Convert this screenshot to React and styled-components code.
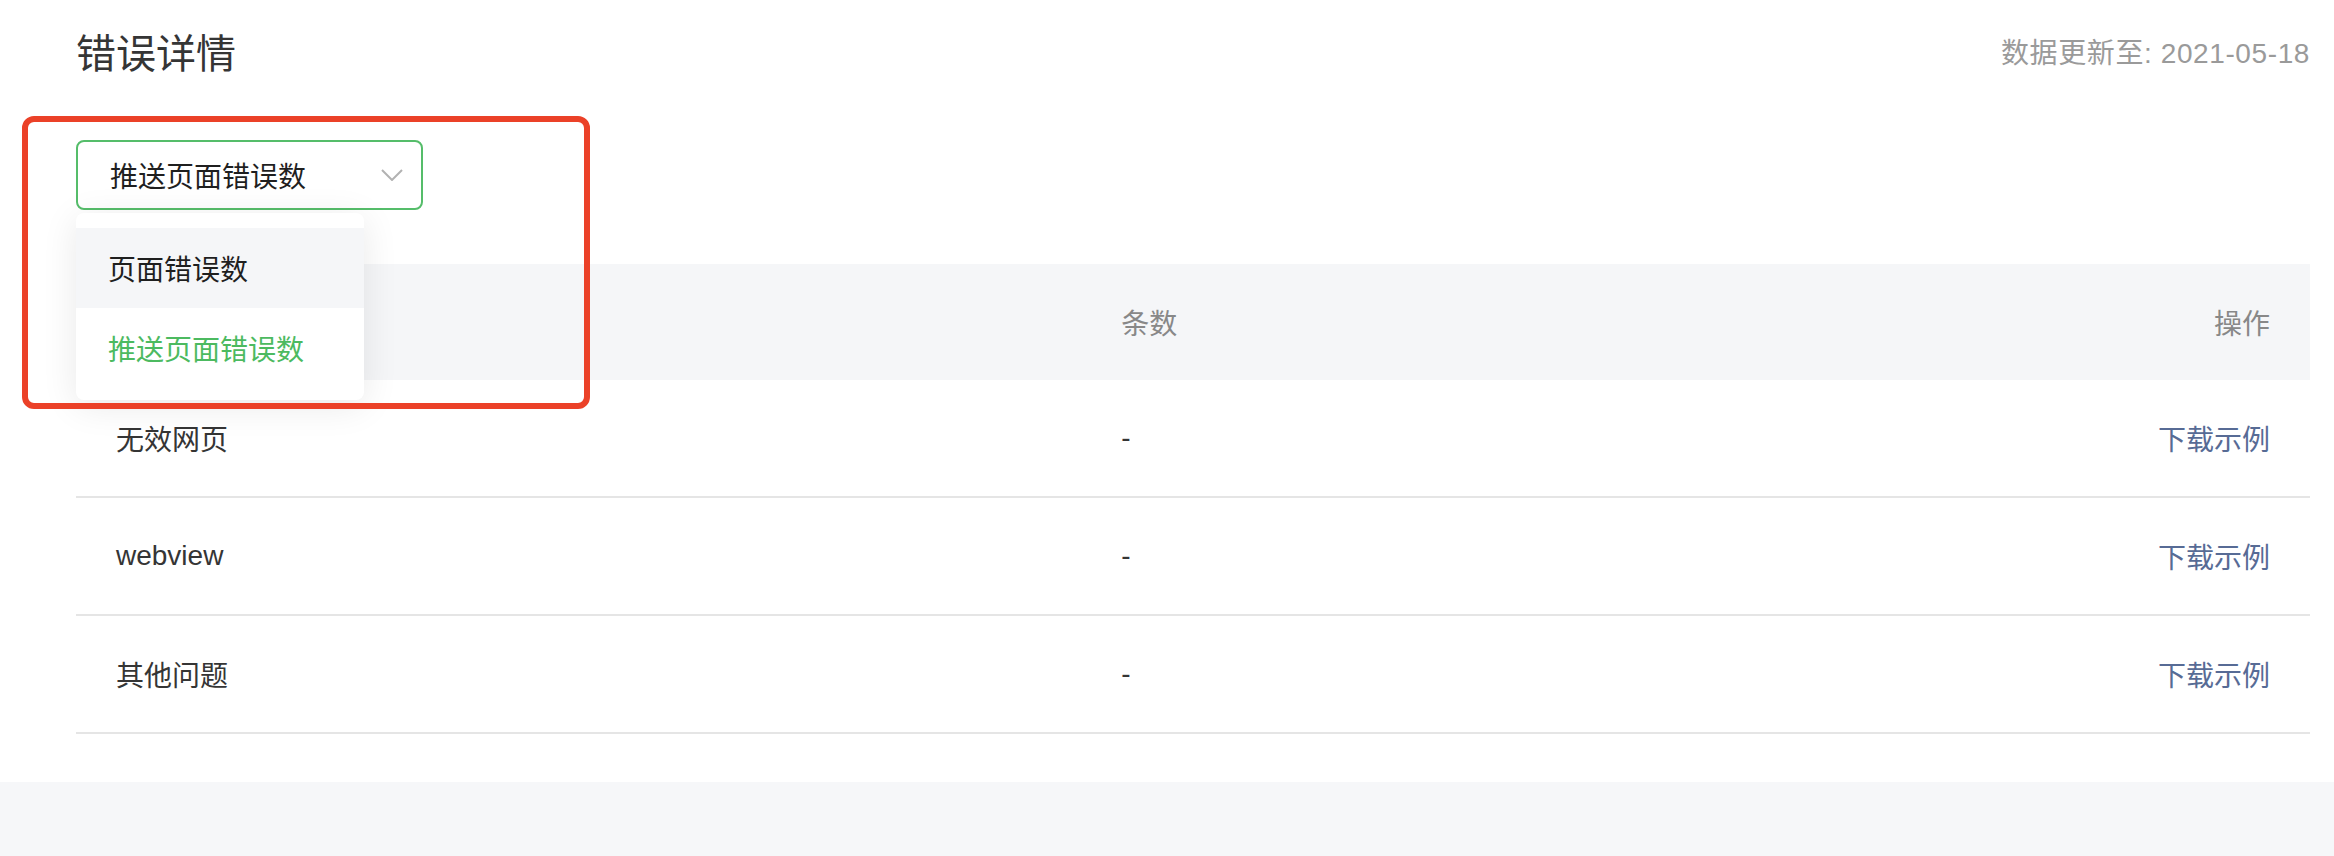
import styled, { createGlobalStyle } from "styled-components";

const GlobalStyle = createGlobalStyle`
  html, body {
    margin: 0;
    padding: 0;
    background: #f6f7f9;
  }
  body {
    font-family: "Liberation Sans", "Noto Sans CJK SC", sans-serif;
  }
`;

const Page = styled.div`
  min-height: 100vh;
  background: #f6f7f9;
`;

const Card = styled.section`
  background: #fff;
  padding: 26px 24px 48px 76px;
`;

const Header = styled.div`
  display: flex;
  justify-content: space-between;
  align-items: center;
  height: 56px;
`;

const Title = styled.h2`
  margin: 0;
  font-size: 40px;
  line-height: 56px;
  font-weight: 400;
  color: #353535;
`;

const UpdateTime = styled.span`
  font-size: 28px;
  line-height: 40px;
  letter-spacing: 0.6px;
  color: #9a9a9a;
`;

const Filter = styled.div`
  position: relative;
  width: 347px;
  margin-top: 58px;
`;

const Select = styled.div`
  box-sizing: border-box;
  height: 70px;
  display: flex;
  align-items: center;
  justify-content: space-between;
  padding: 0 18px 0 32px;
  border: 2px solid #55bd6a;
  border-radius: 8px;
  background: #fff;
  font-size: 28px;
  color: #1f1f1f;
`;

const Menu = styled.ul`
  position: absolute;
  top: 73px;
  left: 0;
  width: 288px;
  margin: 0;
  padding: 15px 0 12px;
  list-style: none;
  background: #fff;
  border-radius: 8px;
  box-shadow: 0 6px 36px rgba(0, 0, 0, 0.09);
  z-index: 2;
`;

const MenuItem = styled.li`
  height: 80px;
  display: flex;
  align-items: center;
  padding: 0 32px;
  font-size: 28px;
  color: ${(p) => (p.$selected ? "#4cba60" : "#1f1f1f")};
  background: ${(p) => (p.$hover ? "#f5f6f8" : "#fff")};
`;

const Marker = styled.div`
  position: absolute;
  left: -54px;
  top: -24px;
  width: 568px;
  height: 293px;
  box-sizing: border-box;
  border: 6px solid #eb4128;
  border-radius: 12px;
  z-index: 3;
  pointer-events: none;
`;

const Table = styled.table`
  width: 100%;
  margin-top: 54px;
  border-collapse: collapse;
  table-layout: fixed;
  font-size: 28px;
`;

const Th = styled.th`
  height: 116px;
  padding: 0 40px;
  background: #f5f6f8;
  font-weight: 400;
  color: #888;
  text-align: ${(p) => p.$align || "left"};
`;

const Td = styled.td`
  height: 116px;
  padding: 0 40px;
  border-bottom: 2px solid #e5e5e5;
  color: #353535;
  text-align: ${(p) => p.$align || "left"};
`;

const Link = styled.a`
  color: #576b95;
  text-decoration: none;
  cursor: pointer;
`;

const Chevron = () => (
  <svg width="22" height="12" viewBox="0 0 22 12" fill="none">
    <path d="M1 1l10 10L21 1" stroke="#b2b2b2" strokeWidth="2" />
  </svg>
);

const rows = [
  { name: "无效网页", count: "-" },
  { name: "webview", count: "-" },
  { name: "其他问题", count: "-" },
];

export default function App() {
  return (
    <Page>
      <GlobalStyle />
      <Card>
        <Header>
          <Title>错误详情</Title>
          <UpdateTime>数据更新至: 2021-05-18</UpdateTime>
        </Header>
        <Filter>
          <Marker />
          <Select>
            <span>推送页面错误数</span>
            <Chevron />
          </Select>
          <Menu>
            <MenuItem $hover>页面错误数</MenuItem>
            <MenuItem $selected>推送页面错误数</MenuItem>
          </Menu>
        </Filter>
        <Table>
          <colgroup>
            <col style={{ width: "45%" }} />
            <col />
            <col />
          </colgroup>
          <thead>
            <tr>
              <Th />
              <Th>条数</Th>
              <Th $align="right">操作</Th>
            </tr>
          </thead>
          <tbody>
            {rows.map((r) => (
              <tr key={r.name}>
                <Td>{r.name}</Td>
                <Td>{r.count}</Td>
                <Td $align="right">
                  <Link>下载示例</Link>
                </Td>
              </tr>
            ))}
          </tbody>
        </Table>
      </Card>
    </Page>
  );
}
